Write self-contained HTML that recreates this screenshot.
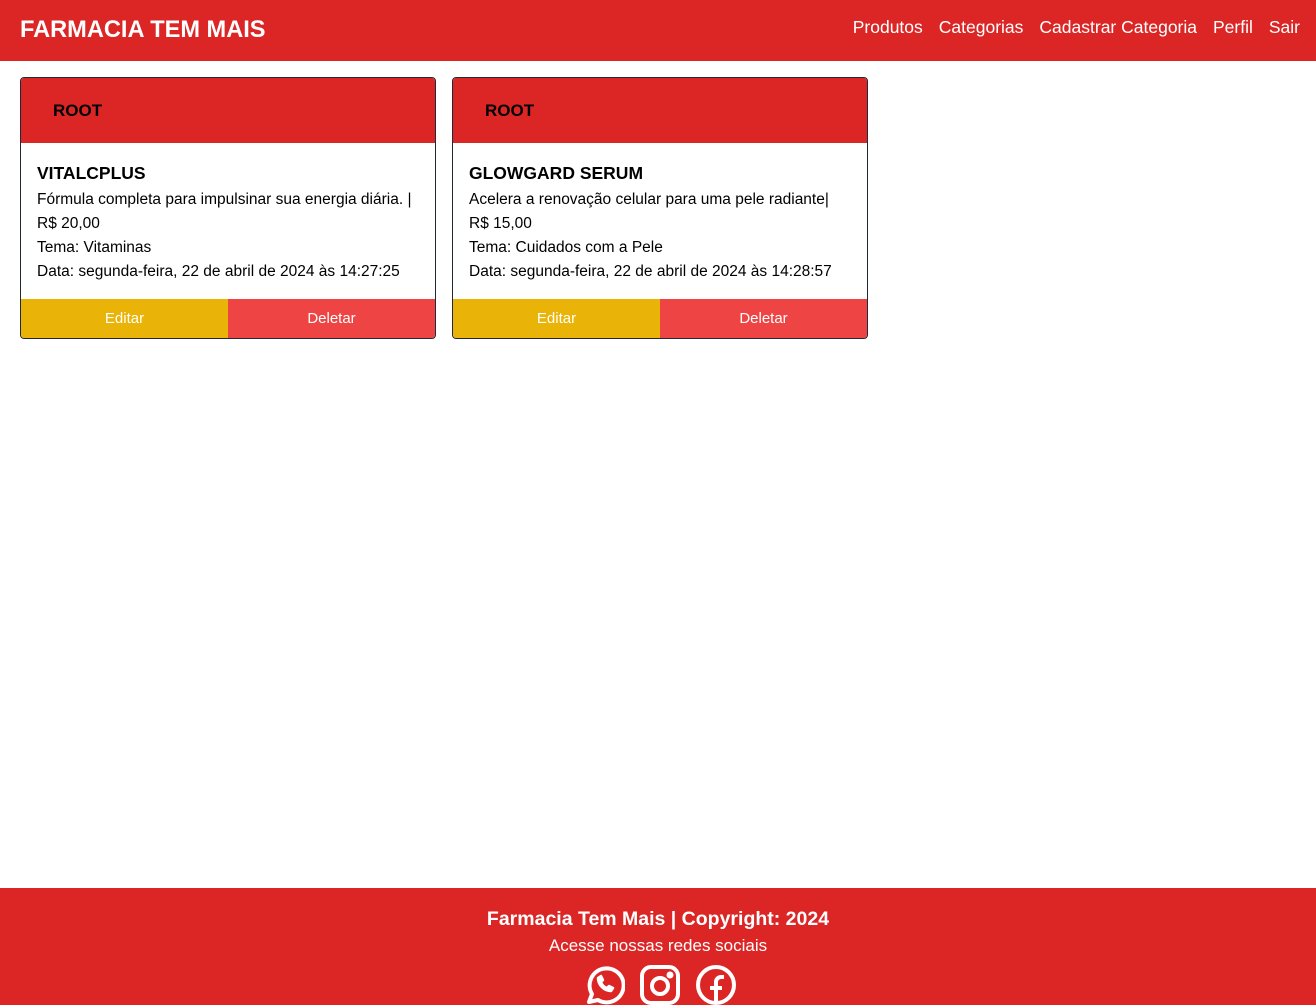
<!DOCTYPE html>
<html><head><meta charset="utf-8"><style>
*{margin:0;padding:0;box-sizing:border-box}
body{width:1316px;height:1005px;position:relative;font-family:"Liberation Sans",sans-serif;background:#fff;overflow:hidden}
.nav{position:absolute;top:0;left:0;width:1316px;height:61px;background:#dc2626;color:#fff}
.logo{position:absolute;left:20px;top:17px;font-size:23.6px;font-weight:bold}
.links{position:absolute;right:16px;top:17px;font-size:17.5px;display:flex;gap:16px}
.card{position:absolute;top:77px;width:416px;height:262px;border:1px solid #1f2937;border-radius:4px;overflow:hidden}
.hd{height:65px;background:#dc2626;font-weight:bold;font-size:17px;padding:23px 32px}
.bd{padding:20px 16px 0;font-size:15.5px;line-height:24px;height:156px;color:#000}
.bd h3{font-size:17.5px;line-height:20px;margin-bottom:5px}
.bt{display:flex;height:40px}
.bt div{flex:1;color:#fff;text-align:center;line-height:40px;font-size:15px}
.foot{position:absolute;top:888px;left:0;width:1316px;height:117px;background:#dc2626;color:#fff;text-align:center}
.foot b{display:block;font-size:19.5px;margin-top:20px}
.foot p{font-size:17px;margin-top:5px}
.ic{position:absolute;top:964px}
</style></head><body>
<div class="nav"><div class="logo">FARMACIA TEM MAIS</div>
<div class="links"><span>Produtos</span><span>Categorias</span><span>Cadastrar Categoria</span><span>Perfil</span><span>Sair</span></div></div>
<div class="card" style="left:20px"><div class="hd">ROOT</div><div class="bd"><h3>VITALCPLUS</h3>Fórmula completa para impulsinar sua energia diária. |<br>R$ 20,00<br>Tema: Vitaminas<br>Data: segunda-feira, 22 de abril de 2024 às 14:27:25</div><div class="bt"><div style="background:#eab308">Editar</div><div style="background:#ef4444">Deletar</div></div></div>
<div class="card" style="left:452px"><div class="hd">ROOT</div><div class="bd"><h3>GLOWGARD SERUM</h3>Acelera a renovação celular para uma pele radiante|<br>R$ 15,00<br>Tema: Cuidados com a Pele<br>Data: segunda-feira, 22 de abril de 2024 às 14:28:57</div><div class="bt"><div style="background:#eab308">Editar</div><div style="background:#ef4444">Deletar</div></div></div>
<div class="foot"><b>Farmacia Tem Mais | Copyright: 2024</b><p>Acesse nossas redes sociais</p></div>
<svg class="ic" style="left:583px" width="42" height="42" viewBox="0 0 42 42" fill="none" stroke="#fff" stroke-width="4" stroke-linejoin="round"><path d="M6 38l3-8a17 17 0 1 1 6 6z"/><path d="M15 14c0 7 6 13 13 13l2-3-4-2-2 2c-3-1-5-3-6-6l2-2-2-4z" stroke-width="2.5" fill="#fff"/></svg>
<svg class="ic" style="left:639px" width="42" height="42" viewBox="0 0 42 42" fill="none" stroke="#fff" stroke-width="4"><rect x="3" y="3" width="36" height="36" rx="9"/><circle cx="21" cy="22" r="8"/><circle cx="31" cy="11" r="1.5" fill="#fff"/></svg>
<svg class="ic" style="left:695px" width="42" height="42" viewBox="0 0 42 42" fill="none" stroke="#fff" stroke-width="4"><circle cx="21" cy="21" r="18"/><path d="M21 40V18a5 5 0 0 1 5-5h3M15 24h12"/></svg>
</body></html>
